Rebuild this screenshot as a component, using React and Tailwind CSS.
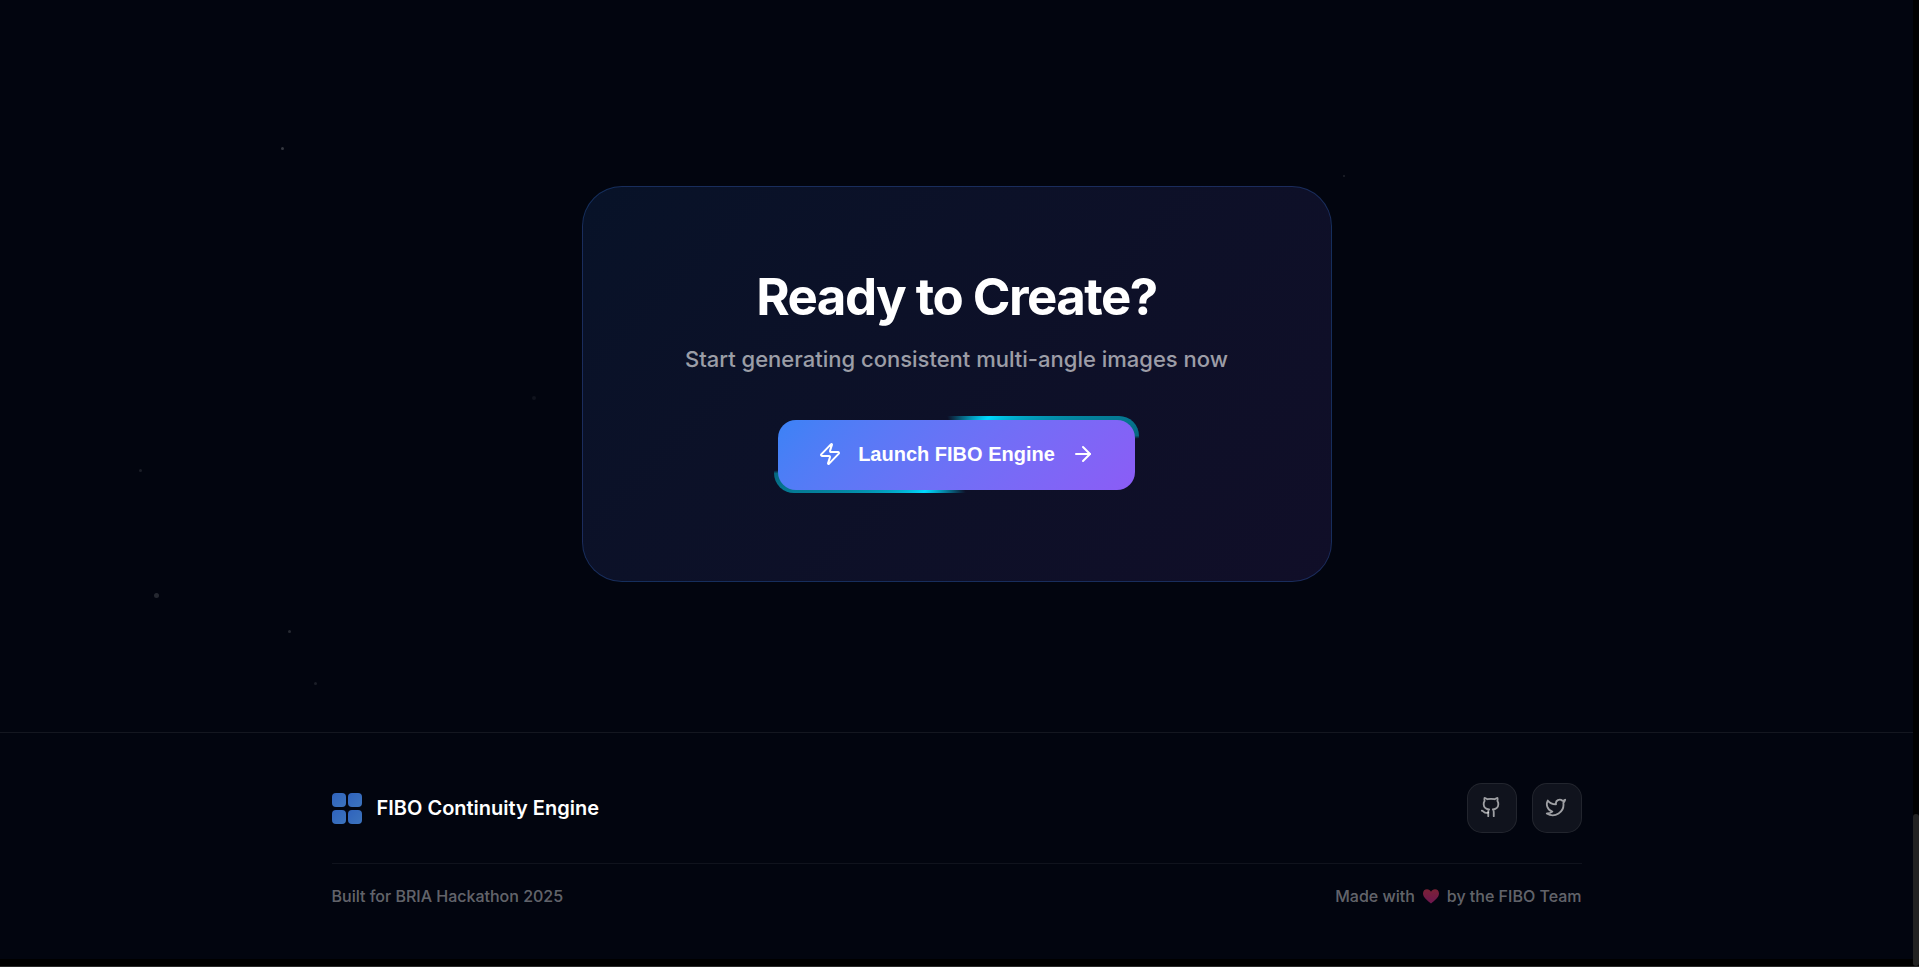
import React from 'react';
import { Zap, ArrowRight, Github, Twitter } from 'lucide-react';

const particles = [
    { left: 281, top: 147, size: 3, opacity: 0.2 },
    { left: 1343, top: 175, size: 2, opacity: 0.12 },
    { left: 532, top: 396, size: 4, opacity: 0.06 },
    { left: 139, top: 469, size: 3, opacity: 0.1 },
    { left: 154, top: 593, size: 5, opacity: 0.14 },
    { left: 288, top: 630, size: 3, opacity: 0.15 },
    { left: 314, top: 682, size: 3, opacity: 0.1 },
];

const Particles = () => (
    <div className="pointer-events-none absolute inset-0" aria-hidden="true">
        {particles.map((p) => (
            <span
                key={`${p.left}-${p.top}`}
                className="absolute rounded-full bg-white"
                style={{ left: p.left, top: p.top, width: p.size, height: p.size, opacity: p.opacity }}
            />
        ))}
    </div>
);

const LaunchButton = () => (
    <div className="relative isolate inline-flex">
        <span className="absolute -inset-x-1 -top-1 -bottom-[3px] -z-10 rounded-[20px] bg-[conic-gradient(from_-14deg,transparent_0deg,#00d9ff_55deg,#056880_98deg,transparent_99deg,transparent_180deg,#00d9ff_235deg,#056880_278deg,transparent_279deg)]" />
        <button
            type="button"
            className="flex items-center gap-4 rounded-[18px] bg-linear-135 from-[#3b82f6] to-[#8b5cf6] px-10 pt-[19px] pb-[21px] font-['Liberation_Sans',Arial,sans-serif] text-xl leading-[30px] font-bold text-white"
        >
            <Zap size={24} />
            <span>Launch FIBO Engine</span>
            <ArrowRight size={24} />
        </button>
    </div>
);

const SocialLink = ({ href, label, children }) => (
    <a
        href={href}
        aria-label={label}
        className="flex size-[50px] items-center justify-center rounded-[15px] border border-white/8 bg-white/6 pr-0.5 pb-0.5 text-white/60"
    >
        {children}
    </a>
);

const Logo = () => (
    <svg width="32" height="32" viewBox="0 0 32 32" aria-hidden="true">
        <defs>
            <linearGradient id="tile" x1="0" y1="0" x2="1" y2="1">
                <stop offset="0" stopColor="#2f63bd" />
                <stop offset="1" stopColor="#3d74bd" />
            </linearGradient>
        </defs>
        <rect x="0" y="1" width="14" height="14" rx="4" fill="url(#tile)" />
        <rect x="16" y="1" width="14" height="14" rx="4" fill="url(#tile)" />
        <rect x="0" y="18" width="14" height="14" rx="4" fill="url(#tile)" />
        <rect x="16" y="18" width="14" height="14" rx="4" fill="url(#tile)" />
    </svg>
);

const CallToAction = () => (
    <section className="flex justify-center px-10 pt-[186px] pb-[150px]">
        <div className="flex w-full max-w-[750px] flex-col items-center rounded-[40px] border border-[#3b82f6]/25 bg-linear-135 from-[#3b82f6]/11 to-[#8b5cf6]/11 px-10 pt-20 pb-[91px] text-center">
            <h2 className="text-[51px] leading-[60px] font-bold tracking-[-0.03em] text-white">Ready to Create?</h2>
            <p className="mt-4 mb-[45px] text-[22px] leading-8 font-medium text-white/60">
                Start generating consistent multi-angle images now
            </p>
            <LaunchButton />
        </div>
    </section>
);

const Footer = () => (
    <footer className="border-t border-white/7 px-10 pt-[50px] pb-[51px]">
        <div className="mx-auto max-w-[1250px]">
            <div className="flex items-center justify-between border-b border-white/6 pb-[30px]">
                <div className="flex items-center gap-[13px]">
                    <Logo />
                    <span className="text-xl font-semibold text-white">FIBO Continuity Engine</span>
                </div>
                <div className="flex gap-[15px]">
                    <SocialLink href="#github" label="GitHub">
                        <Github size={22} />
                    </SocialLink>
                    <SocialLink href="#twitter" label="Twitter">
                        <Twitter size={22} />
                    </SocialLink>
                </div>
            </div>
            <div className="flex items-center justify-between pt-5 text-base leading-6 font-medium text-white/40">
                <p>Built for BRIA Hackathon 2025</p>
                <p className="flex items-center gap-[7px]">
                    Made with
                    <svg width="18" height="16" viewBox="0 0 18 16" role="img" aria-label="love">
                        <defs>
                            <linearGradient id="heart" x1="0" y1="0" x2="0" y2="1">
                                <stop offset="0" stopColor="#7b2236" />
                                <stop offset="1" stopColor="#6c1650" />
                            </linearGradient>
                        </defs>
                        <path
                            d="M9 15.500C6 12.800 1 9.400 1 5.400 1 2.800 2.800 1.200 5 1.200c1.800 0 3.200 1 4 2.500.800-1.500 2.200-2.500 4-2.500 2.200 0 4 1.600 4 4.200 0 4-5 7.400-8 10.100z"
                            fill="url(#heart)"
                        />
                    </svg>
                    by the FIBO Team
                </p>
            </div>
        </div>
    </footer>
);

const App = () => (
    <div className="flex min-h-screen border-b border-[#2a2a2a] bg-black font-[Inter,sans-serif]">
        <main className="relative flex-1 self-start bg-[#02050f]">
            <Particles />
            <CallToAction />
            <Footer />
        </main>
        <div className="flex w-1.5 flex-col justify-end bg-black">
            <div className="h-[152px] rounded-full bg-[#222222]" />
        </div>
    </div>
);

export default App;
